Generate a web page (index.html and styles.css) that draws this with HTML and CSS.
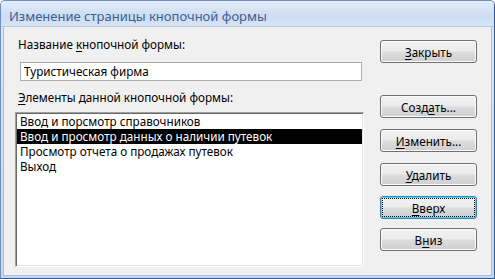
FILE: index.html
```html
<!DOCTYPE html>
<html lang="ru">
<head>
    <meta charset="UTF-8">
    <meta name="viewport" content="width=device-width, initial-scale=1.0">
    <title>Изменение страницы кнопочной формы</title>
    <link rel="stylesheet" href="styles.css">
</head>
<body>
    <div class="window">
        <div class="titlebar">Изменение страницы кнопочной формы</div>
        <div class="client">
            <div class="form">
                <div class="label label-name">Название <u>к</u>нопочной формы:</div>
                <div class="textbox">Туристическая фирма</div>
                <div class="label label-items"><u>Э</u>лементы данной кнопочной формы:</div>
                <ul class="listbox">
                    <li>Ввод и порсмотр справочников</li>
                    <li class="selected">Ввод и просмотр данных о наличии путевок</li>
                    <li>Просмотр отчета о продажах путевок</li>
                    <li>Выход</li>
                </ul>
            </div>
            <div class="buttons">
                <button class="btn btn-close"><u>З</u>акрыть</button>
                <button class="btn btn-new">Созд<u>а</u>ть...</button>
                <button class="btn"><u>И</u>зменить...</button>
                <button class="btn"><u>У</u>далить</button>
                <button class="btn btn-up focused"><u>В</u>верх</button>
                <button class="btn btn-down">В<u>н</u>из</button>
            </div>
        </div>
    </div>
</body>
</html>
```

FILE: styles.css
```css
body {
    margin: 0;
    font-family: "Noto Sans", "Open Sans", sans-serif;
    font-size: 11.7px;
    color: #000;
    background: #fff;
}
.window {
    width: 495px;
    height: 279px;
    box-sizing: border-box;
    display: flex;
    flex-direction: column;
    background: linear-gradient(to bottom, #dbe8f8, #c4d8f1);
    border: 1px solid #6f8fbf;
    border-right-color: #34588a;
    border-bottom-color: #34588a;
    border-radius: 5px 5px 0 0;
}
.titlebar {
    height: 25px;
    padding-left: 8px;
    line-height: 30px;
    font-size: 13px;
    color: #3e5d8f;
    background: linear-gradient(to bottom, #e3edf9 0%, #ccdcf2 60%, #d6e4f6 100%);
    border-bottom: 1px solid #b3c9e8;
    border-radius: 4px 4px 0 0;
}
.client {
    flex: 1;
    display: flex;
    margin: 0 2px 2px 2px;
    background: #f0f0f0;
    border: 1px solid #a8c0e2;
    border-top: none;
}
.form {
    width: 349px;
    margin-left: 11px;
    display: flex;
    flex-direction: column;
}
.label {
    height: 15px;
    line-height: 15px;
    padding-left: 3px;
}
.label-name {
    margin-top: 10px;
}
.label-items {
    margin-top: 9px;
}
.textbox {
    margin: 10px 0 0 5px;
    width: 342px;
    height: 19px;
    box-sizing: border-box;
    padding-left: 3px;
    line-height: 17px;
    background: #fff;
    border: 1px solid #abadb3;
    border-top-color: #a6a6a6;
}
.listbox {
    list-style: none;
    margin: 7px 0 0 0;
    width: 349px;
    height: 155px;
    box-sizing: border-box;
    background: #fff;
    border: 1px solid #a0a0a0;
    border-right-color: #fff;
    border-bottom-color: #fff;
    box-shadow: inset 1px 1px 0 #696969, inset -1px -1px 0 #e3e3e3;
    padding: 1px 1px 0 1px;
}
.listbox li {
    height: 15px;
    line-height: 15px;
    padding-left: 3px;
    white-space: nowrap;
}
.listbox li.selected {
    background: #000;
    color: #fff;
}
.buttons {
    margin-left: 16px;
    display: flex;
    flex-direction: column;
}
.btn {
    width: 97px;
    height: 23px;
    padding: 0;
    margin-top: 11px;
    font-family: "Noto Sans", "Open Sans", sans-serif;
    font-size: 11.7px;
    line-height: 20px;
    color: #000;
    border: 1px solid #707070;
    border-radius: 3px;
    background: linear-gradient(to bottom, #f2f2f2 0%, #ebebeb 48%, #dddddd 52%, #cfcfcf 100%);
    box-shadow: inset 0 0 0 1px #fcfcfc;
}
.btn-close {
    margin-top: 13px;
}
.btn-new {
    margin-top: 32px;
}
.btn-up {
    margin-top: 10px;
}
.btn-down {
    margin-top: 9px;
}
.btn.focused {
    border-color: #3c7fb1;
    box-shadow: inset 0 0 0 1px #48d7fb;
    outline: 1px dotted #000;
    outline-offset: -3px;
}
u {
    text-decoration: underline;
    text-underline-offset: 2px;
}
```
